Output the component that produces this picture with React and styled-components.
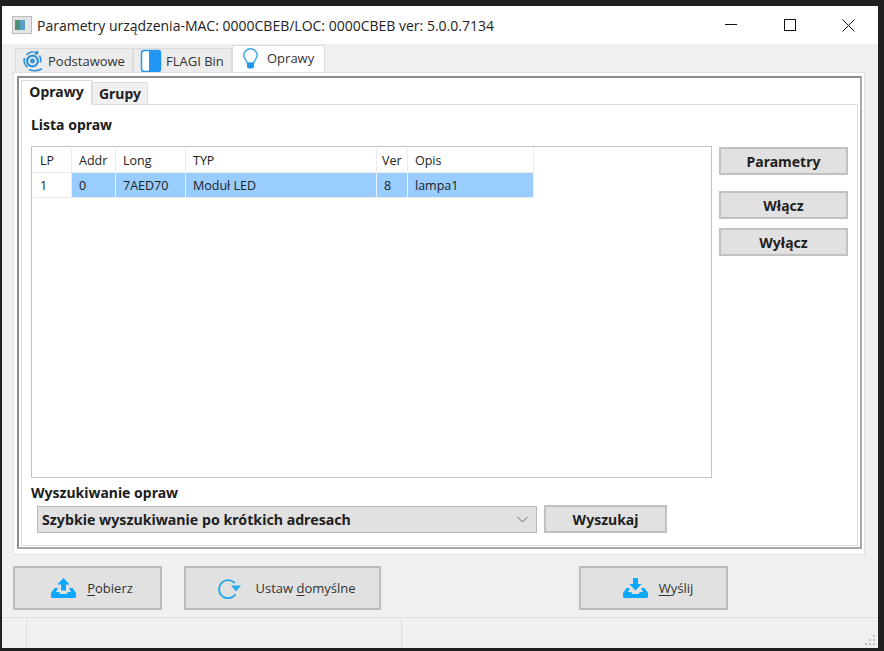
import React from "react";
import styled, { createGlobalStyle } from "styled-components";

const Global = createGlobalStyle`
  html, body { margin: 0; padding: 0; background: #202022; }
  body { width: 884px; height: 651px; overflow: hidden; font-family: "Noto Sans", "Open Sans", sans-serif; color: #1a1a1a; }
`;
const Frame = styled.div`
  width: 884px; height: 651px; box-sizing: border-box;
  padding: 6px 6px 3px 2px; background: #202022;
`;
const Win = styled.div`
  width: 876px; height: 642px; background: #f0f0f0;
  display: flex; flex-direction: column;
`;
const TitleBar = styled.div`
  height: 38px; background: #fff; display: flex; align-items: center; flex: none;
  padding-left: 10px;
`;
const TitleText = styled.div`
  margin-left: 5px; font-size: 14px; color: #222; white-space: nowrap; flex: 1; font-family: "Open Sans", sans-serif;
`;
const WinBtn = styled.div`
  width: 59px; height: 38px; display: flex; align-items: center; justify-content: center; flex: none;
`;
const Body = styled.div`
  flex: 1; display: flex; flex-direction: column; padding: 1px 13px 0 11px;
  min-height: 0;
`;
const OuterTabs = styled.div`
  display: flex; align-items: flex-end; height: 27px; padding-left: 2px; flex: none;
`;
const OuterTab = styled.div`
  box-sizing: border-box; width: ${p => p.$w}px; height: ${p => (p.$active ? 27 : 24)}px;
  background: ${p => (p.$active ? "#fff" : "#ececec")};
  border: 1px solid #dcdcdc; border-bottom: none;
  display: flex; align-items: center; padding-left: ${p => p.$pad || 6}px; gap: ${p => p.$gap || 4}px;
  font-size: 13px; color: #333; padding-bottom: ${p => (p.$active ? 2 : 0)}px;
  font-family: "Open Sans", sans-serif;
  white-space: nowrap;
`;
const OuterPane = styled.div`
  box-sizing: border-box; width: 852px; height: 483px; background: #fff;
  border: 1px solid #dfdfdf; padding: 3px 2px 5px 3px; flex: none;
`;
const Groove = styled.div`
  box-sizing: border-box; height: 100%; border: 2px solid #a9a9a9; border-top-color: #8a8a8a; border-left-color: #8f8f8f;
  padding: 2px 2px 1px 2px; display: flex; flex-direction: column;
`;
const InnerTabs = styled.div`
  display: flex; align-items: flex-end; height: 25px; flex: none; position: relative; z-index: 1; margin-bottom: -1px;
`;
const InnerTab = styled.div`
  box-sizing: border-box; width: ${p => p.$w}px; height: ${p => (p.$active ? 25 : 23)}px;
  background: ${p => (p.$active ? "#fff" : "#f0f0f0")};
  border: 1px solid #dcdcdc; border-bottom: ${p => (p.$active ? "none" : "1px solid #dcdcdc")};
  display: flex; align-items: center; justify-content: center; padding-bottom: ${p => (p.$active ? 4 : 0)}px;
  font-size: 14px; font-weight: 700; color: #222;
`;
const InnerPane = styled.div`
  flex: 1; box-sizing: border-box; border: 1px solid #dcdcdc; padding: 11px 9px 11px 9px;
  display: flex; flex-direction: column; min-height: 0;
`;
const SectionLabel = styled.div`
  font-size: 14px; font-weight: 700; color: #1c1c1c; line-height: 18px; height: 18px; flex: none;
`;
const ListRow = styled.div`
  display: flex; gap: 7px; margin-top: 12px; height: 332px; flex: none;
`;
const TableBox = styled.div`
  box-sizing: border-box; width: 681px; height: 332px; border: 1px solid #c2c2c8; padding: 1px;
  background: #fff; flex: none;
`;
const Row = styled.div`
  display: flex; height: 25px;
`;
const Cell = styled.div`
  box-sizing: border-box; width: ${p => p.$w}px; height: 25px; flex: none;
  display: flex; align-items: center; padding-left: ${p => p.$pl}px; font-size: 12.5px; color: #222;
  font-family: "Open Sans", sans-serif; white-space: nowrap;
  border-right: 1px solid ${p => (p.$sel ? "#e8f2fb" : "#ececec")};
  border-bottom: 1px solid #ececec;
  background: ${p => (p.$sel ? "#99ccff" : "#fff")};
`;
const SideCol = styled.div`
  width: 129px; flex: none; display: flex; flex-direction: column; padding-top: 1px;
`;
const FlatBtn = styled.div`
  box-sizing: border-box; background: #e1e1e1; border: 2px solid #c1c1c1;
  display: flex; align-items: center; justify-content: center; font-size: 14px; font-weight: 700; color: #1f1f1f;
  width: ${p => p.$w || 129}px; height: 28px; flex: none; margin-top: ${p => p.$mt || 0}px;
`;
const SearchLabel = styled(SectionLabel)`
  margin-top: 6px;
`;
const SearchRow = styled.div`
  display: flex; align-items: center; gap: 7px; margin-top: 3px; padding-left: 6px; flex: none;
`;
const Combo = styled.div`
  box-sizing: border-box; width: 500px; height: 27px; background: #e1e1e1; border: 1px solid #b9b9b9;
  display: flex; align-items: center; justify-content: space-between; padding: 0 8px 0 4px;
  font-size: 14.2px; font-weight: 700; color: #222;
`;
const BottomRow = styled.div`
  display: flex; height: 44px; margin-top: 11px; flex: none;
`;
const ActionBtn = styled.div`
  box-sizing: border-box; width: ${p => p.$w}px; height: 44px; margin-left: ${p => p.$ml || 0}px; background: #e1e1e1;
  border: 2px solid #bcbcbc; display: flex; align-items: center; justify-content: center; gap: ${p => p.$gap || 11}px;
  padding-left: ${p => p.$pl || 9}px;
  font-size: 13px; color: #333; font-family: "Open Sans", sans-serif; flex: none;
  u { text-underline-offset: 2px; }
`;
const StatusBar = styled.div`
  margin-top: auto; height: 30px; border-top: 1px solid #dedede; display: flex; flex: none; position: relative;
`;
const StatusCell = styled.div`
  box-sizing: border-box; width: ${p => p.$w}px; flex: none; border-right: 1px solid #dedede; margin-top: 2px;
`;
const Grip = styled.svg`
  position: absolute; right: 2px; bottom: 2px;
`;

const Podst = () => (
  <svg width="22" height="22" viewBox="0 0 22 22" fill="none" stroke="#2f8fd8" strokeWidth="1.6">
    <path d="M4.5 5A8.5 8.5 0 0 1 15 3" />
    <path d="M15 .8l.6 2.6-2.6.8" />
    <path d="M17.5 5.5a9 9 0 0 1 1 7" />
    <path d="M2.5 8a8.5 8.5 0 0 0 3 9" />
    <path d="M7 19.5c3.5 1.8 8 1.8 13-.8" />
    <circle cx="10.5" cy="11" r="5.4" strokeWidth="2.2" />
    <circle cx="10.5" cy="11" r="2.4" fill="#2f8fd8" stroke="none" />
  </svg>
);
const Flag = () => (
  <svg width="22" height="24" viewBox="0 0 22 24">
    <rect x="1.5" y="1.5" width="19" height="21" rx="2.5" fill="#fff" stroke="#2196f3" strokeWidth="1.5" />
    <path d="M9 1.5h9a2.5 2.5 0 0 1 2.5 2.5v16a2.5 2.5 0 0 1-2.5 2.5H9z" fill="#2196f3" />
  </svg>
);
const Bulb = () => (
  <svg width="15" height="21" viewBox="0 0 15 21" fill="none">
    <path d="M7.5 .8A6.7 6.7 0 0 0 .8 7.5c0 2.6 2.5 4 3.4 7.5h6.6c.9-3.5 3.4-4.9 3.4-7.5A6.7 6.7 0 0 0 7.5 .8z" stroke="#3aa6e8" strokeWidth="1.4" fill="#fff" />
    <path d="M4 15h7v3.5a2 2 0 0 1-2 2H6a2 2 0 0 1-2-2z" fill="#1e9be8" />
  </svg>
);
const AppIcon = () => (
  <svg width="20" height="18" viewBox="0 0 20 18">
    <rect x="0.5" y="0.5" width="19" height="17" fill="#e4e4e4" stroke="#bdbdbd" />
    <rect x="3" y="4" width="5" height="10" fill="#4f8f78" />
    <rect x="8" y="4" width="5" height="10" fill="#5a9fc8" />
    <rect x="13" y="4" width="4" height="10" fill="#e2e8e4" />
  </svg>
);
const Upload = () => (
  <svg width="25" height="20" viewBox="0 0 25 20" fill="#0ba8ff">
    <path d="M12.5 0l6.2 6.5H15V12.5H10V6.5H6.3z" />
    <path d="M3.5 10H7L5 14H8L9.5 16H15.5L17 14H20L18 10H21.5L25 15V18.5a1.5 1.5 0 0 1-1.5 1.5H1.5A1.5 1.5 0 0 1 0 18.5V15Z" />
  </svg>
);
const Download = () => (
  <svg width="25" height="20" viewBox="0 0 25 20" fill="#0ba8ff">
    <path d="M10 0H15V6H18.7L12.5 12.5 6.3 6H10z" />
    <path d="M3.5 10H7L5 14H8L9.5 16H15.5L17 14H20L18 10H21.5L25 15V18.5a1.5 1.5 0 0 1-1.5 1.5H1.5A1.5 1.5 0 0 1 0 18.5V15Z" />
  </svg>
);
const Refresh = () => (
  <svg width="24" height="22" viewBox="0 0 24 22" fill="none">
    <path d="M16.8 6.2A9 9 0 1 0 17.5 17.2" stroke="#29a9ea" strokeWidth="1.9" />
    <path d="M13 8.5h10l-5 6z" fill="#29a9ea" />
  </svg>
);

const cols = [39, 44, 70, 191, 31, 126];
const pads = [7, 7, 7, 7, 5, 7];
const head = ["LP", "Addr", "Long", "TYP", "Ver", "Opis"];
const data = ["1", "0", "7AED70", "Moduł LED", "8", "lampa1"];

export default function App() {
  return (
    <Frame>
      <Global />
      <Win>
        <TitleBar>
          <AppIcon />
          <TitleText>Parametry urządzenia-MAC: 0000CBEB/LOC: 0000CBEB ver: 5.0.0.7134</TitleText>
          <WinBtn>
            <svg width="12" height="2"><rect width="12" height="1" fill="#111" /></svg>
          </WinBtn>
          <WinBtn>
            <svg width="12" height="12"><rect x="0.5" y="0.5" width="11" height="11" fill="none" stroke="#111" /></svg>
          </WinBtn>
          <WinBtn>
            <svg width="13" height="13"><path d="M0.5 0.5l12 12M12.5 0.5l-12 12" stroke="#111" /></svg>
          </WinBtn>
        </TitleBar>
        <Body>
          <OuterTabs>
            <OuterTab $w={118}><Podst />Podstawowe</OuterTab>
            <OuterTab $w={99}><Flag />FLAGI Bin</OuterTab>
            <OuterTab $w={93} $active $pad={10} $gap={9}><Bulb />Oprawy</OuterTab>
          </OuterTabs>
          <OuterPane>
            <Groove>
              <InnerTabs>
                <InnerTab $w={71} $active>Oprawy</InnerTab>
                <InnerTab $w={56}>Grupy</InnerTab>
              </InnerTabs>
              <InnerPane>
                <SectionLabel>Lista opraw</SectionLabel>
                <ListRow>
                  <TableBox>
                    <Row>
                      {head.map((t, i) => <Cell key={t} $w={cols[i]} $pl={pads[i]}>{t}</Cell>)}
                    </Row>
                    <Row>
                      {data.map((t, i) => <Cell key={t} $w={cols[i]} $pl={7} $sel={i > 0}>{t}</Cell>)}
                    </Row>
                  </TableBox>
                  <SideCol>
                    <FlatBtn>Parametry</FlatBtn>
                    <FlatBtn $mt={16}>Włącz</FlatBtn>
                    <FlatBtn $mt={9}>Wyłącz</FlatBtn>
                  </SideCol>
                </ListRow>
                <SearchLabel>Wyszukiwanie opraw</SearchLabel>
                <SearchRow>
                  <Combo>
                    Szybkie wyszukiwanie po krótkich adresach
                    <svg width="11" height="7" viewBox="0 0 11 7" fill="none"><path d="M0.5 1l5 5 5-5" stroke="#666" /></svg>
                  </Combo>
                  <FlatBtn $w={123}>Wyszukaj</FlatBtn>
                </SearchRow>
              </InnerPane>
            </Groove>
          </OuterPane>
          <BottomRow>
            <ActionBtn $w={149}><Upload /><span><u>P</u>obierz</span></ActionBtn>
            <ActionBtn $w={197} $ml={22} $gap={13}><Refresh /><span>Ustaw <u>d</u>omyślne</span></ActionBtn>
            <ActionBtn $w={149} $ml={198}><Download /><span><u>W</u>yślij</span></ActionBtn>
          </BottomRow>
        </Body>
        <StatusBar>
          <StatusCell $w={25} />
          <StatusCell $w={375} />
          <Grip width="11" height="11" viewBox="0 0 11 11" fill="#bdbdbd">
            <rect x="8" y="0" width="2" height="2" />
            <rect x="4" y="4" width="2" height="2" /><rect x="8" y="4" width="2" height="2" />
            <rect x="0" y="8" width="2" height="2" /><rect x="4" y="8" width="2" height="2" /><rect x="8" y="8" width="2" height="2" />
          </Grip>
        </StatusBar>
      </Win>
    </Frame>
  );
}
